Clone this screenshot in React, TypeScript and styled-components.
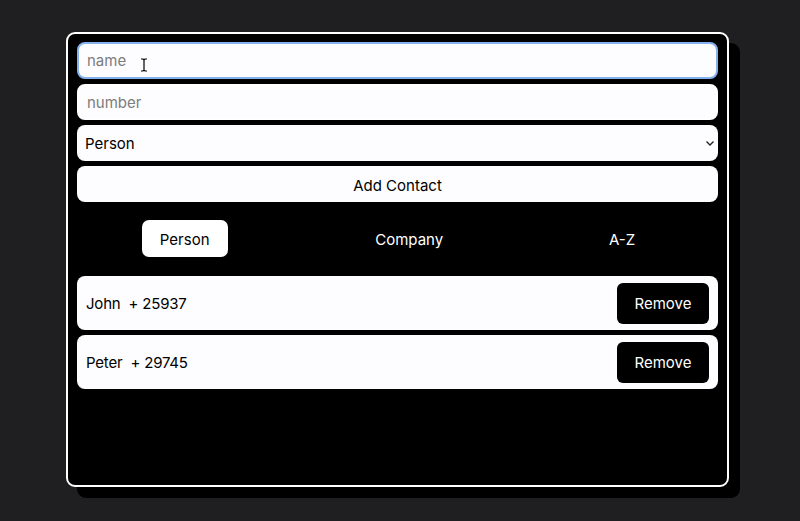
import React, { useState } from 'react';
import styled, { createGlobalStyle } from 'styled-components';

const GlobalStyle = createGlobalStyle`
  html, body {
    margin: 0;
    padding: 0;
    background: #1f1e21;
    font-family: Inter, "Noto Sans", sans-serif;
    letter-spacing: -0.2px;
  }
`;

const Page = styled.main`
  padding: 32px 0 0 66px;
  min-height: 521px;
  box-sizing: border-box;
`;

const Card = styled.section`
  width: 663px;
  height: 455px;
  box-sizing: border-box;
  background: #000;
  border: 2px solid #fff;
  border-radius: 9px;
  box-shadow: 11px 11px 0 #000;
  padding: 8px 9px;
  display: flex;
  flex-direction: column;
`;

const Form = styled.form`
  display: flex;
  flex-direction: column;
  gap: 5px;
`;

const Field = styled.div`
  position: relative;
`;

const Input = styled.input<{ $focused?: boolean }>`
  width: 100%;
  height: ${p => (p.$focused ? '37px' : '36px')};
  box-sizing: border-box;
  border-radius: 8px;
  border: 2px solid ${p => (p.$focused ? '#85b2ee' : '#fff')};
  background: #fdfcfe;
  padding: 0 8px;
  font: inherit;
  font-size: 15px;
  color: #000;
  outline: none;
  &::placeholder { color: #7c7c7c; }
`;

const Select = styled.select`
  width: 100%;
  height: 36px;
  box-sizing: border-box;
  border-radius: 8px;
  border: none;
  background: #fdfcfe;
  padding: 0 8px;
  font: inherit;
  font-size: 15px;
  color: #000;
  appearance: none;
  outline: none;
`;

const Chevron = styled.svg`
  position: absolute;
  right: 3px;
  top: 14px;
  pointer-events: none;
`;

const Cursor = styled.svg`
  position: absolute;
  left: 63px;
  top: 16px;
  pointer-events: none;
`;

const SubmitButton = styled.button`
  height: 36px;
  padding-top: 3px;
  border: none;
  border-radius: 8px;
  background: #fdfcfe;
  font: inherit;
  font-size: 15px;
  color: #000;
`;

const Tabs = styled.nav`
  display: flex;
  justify-content: space-around;
  align-items: center;
  margin-top: 18px;
  margin-bottom: 19px;
`;

const Tab = styled.button<{ $active?: boolean }>`
  height: 37px;
  padding: 2px 18px 0;
  border: none;
  border-radius: 7px;
  background: ${p => (p.$active ? '#fff' : 'transparent')};
  color: ${p => (p.$active ? '#000' : '#fff')};
  font: inherit;
  font-size: 15px;
`;

const List = styled.ul`
  list-style: none;
  margin: 0;
  padding: 0;
  display: flex;
  flex-direction: column;
  gap: 5px;
`;

const Row = styled.li`
  height: 54px;
  box-sizing: border-box;
  background: #fdfcfe;
  border-radius: 8px;
  padding: 7px 9px;
  display: flex;
  align-items: center;
  justify-content: space-between;
  font-size: 15px;
  color: #000;
`;

const Name = styled.span`
  white-space: pre;
`;

const RemoveButton = styled.button`
  width: 92px;
  height: 41px;
  border: none;
  border-radius: 6px;
  background: #000;
  color: #fff;
  font: inherit;
  font-size: 15px;
`;

const contacts = [
  { name: 'John', number: '25937' },
  { name: 'Peter', number: '29745' },
];

export default function App() {
  const [active, setActive] = useState('Person');

  return (
    <>
      <GlobalStyle />
      <Page>
        <Card>
          <Form onSubmit={e => e.preventDefault()}>
            <Field>
              <Input $focused placeholder="name" />
              <Cursor width="8" height="14" viewBox="0 0 8 14">
                <path d="M1 1h2l1 1 1-1h2M4 2v10M1 13h2l1-1 1 1h2" fill="none" stroke="#000" strokeWidth="1.2" />
              </Cursor>
            </Field>
            <Input placeholder="number" />
            <Field>
              <Select defaultValue="Person">
                <option>Person</option>
                <option>Company</option>
              </Select>
              <Chevron width="10" height="8" viewBox="0 0 10 8">
                <path d="M1.5 2.5l3.5 3.5 3.5-3.5" fill="none" stroke="#222" strokeWidth="1.3" />
              </Chevron>
            </Field>
            <SubmitButton type="submit">Add Contact</SubmitButton>
          </Form>
          <Tabs>
            {['Person', 'Company', 'A-Z'].map(t => (
              <Tab key={t} $active={active === t} onClick={() => setActive(t)}>
                {t}
              </Tab>
            ))}
          </Tabs>
          <List>
            {contacts.map(c => (
              <Row key={c.name}>
                <Name>{`${c.name}  + ${c.number}`}</Name>
                <RemoveButton>Remove</RemoveButton>
              </Row>
            ))}
          </List>
        </Card>
      </Page>
    </>
  );
}
